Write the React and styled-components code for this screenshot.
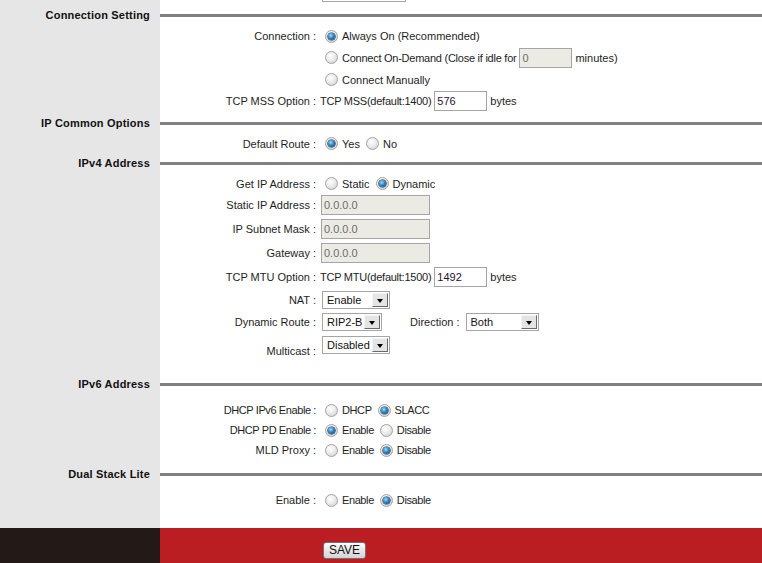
import React from "react"
import styled, { createGlobalStyle, css } from "styled-components"

const GlobalStyle = createGlobalStyle`
  html, body {
    margin: 0;
    padding: 0;
    overflow: hidden;
    background: #fff;
  }
  body {
    font-family: "Liberation Sans", Arial, sans-serif;
    font-size: 11px;
    color: #1e1e1e;
  }
`

const Page = styled.div`
  width: 762px;
  height: 563px;
  display: flex;
  flex-direction: column;
  overflow: hidden;
`

const Main = styled.div`
  height: 528px;
  flex-shrink: 0;
  display: flex;
  flex-direction: column;
  overflow: hidden;
  background: linear-gradient(90deg, #e6e6e6 0 160px, #fff 160px);
`

const Row = styled.div`
  height: ${(p) => p.$h}px;
  flex-shrink: 0;
  display: grid;
  grid-template-columns: 160px 160px 1fr;
  align-items: ${(p) => (p.$top ? "start" : "center")};
`

const SectionRow = styled.div`
  height: ${(p) => p.$h}px;
  flex-shrink: 0;
  display: grid;
  grid-template-columns: 160px 1fr;
  align-items: center;
`

const SectionTitle = styled.div`
  font-weight: bold;
  color: #111;
  text-align: right;
  padding-right: 10px;
  letter-spacing: 0.2px;
  white-space: nowrap;
`

const Rule = styled.div`
  height: 3px;
  background: #808080;
`

const Label = styled.div`
  grid-column: 2;
  text-align: right;
  padding-right: 4px;
  white-space: nowrap;
  letter-spacing: ${(p) => (p.$tight ? "-0.4px" : "normal")};
  ${(p) =>
    p.$bottom &&
    css`
      align-self: end;
      padding-bottom: 3px;
    `}
`

const Field = styled.div`
  grid-column: 3;
  display: flex;
  align-items: center;
  white-space: nowrap;
  ${(p) =>
    p.$top &&
    css`
      align-self: start;
      padding-top: ${p.$top}px;
    `}
`

const Option = styled.span`
  display: inline-flex;
  align-items: center;
  margin-right: 1px;
  letter-spacing: ${(p) => (p.$tight ? "-0.4px" : "normal")};
`

const Radio = styled.span`
  position: relative;
  display: inline-block;
  flex-shrink: 0;
  box-sizing: border-box;
  width: 13px;
  height: 13px;
  margin: 0 4px 0 5px;
  border-radius: 50%;
  border: 1px solid #a3a3a3;
  background: radial-gradient(circle at 40% 35%, #ffffff 0%, #ececec 45%, #c9c9c9 100%);
  ${(p) =>
    p.$checked &&
    css`
      &::after {
        content: "";
        position: absolute;
        left: 2px;
        top: 2px;
        width: 7px;
        height: 7px;
        border-radius: 50%;
        background: radial-gradient(circle at 40% 35%, #9ee0ff 0%, #2a86c8 45%, #0a3b6b 100%);
        box-shadow: 0 0 0 0.6px #1b2a3a;
      }
    `}
`

const TextBox = styled.input`
  box-sizing: border-box;
  width: ${(p) => p.$w}px;
  height: 20px;
  margin: 0 ${(p) => p.$mr || 0}px 0 ${(p) => p.$ml || 0}px;
  padding: 0 2px;
  border: 1px solid #a5a5a5;
  background: ${(p) => (p.disabled ? "#ebebe4" : "#fff")};
  font-family: "Liberation Sans", Arial, sans-serif;
  font-size: 11px;
  color: ${(p) => (p.disabled ? "#6d6d6d" : "#2a1030")};
  outline: none;
`

const Select = styled.div`
  box-sizing: border-box;
  display: inline-flex;
  align-items: center;
  justify-content: space-between;
  width: ${(p) => p.$w}px;
  height: 18px;
  margin-left: ${(p) => p.$ml || 1}px;
  padding: 0 1px 0 4px;
  border: 1px solid #a5a5a5;
  background: #fff;
  font-size: 11px;
  color: #111;
`

const SelectButton = styled.span`
  box-sizing: border-box;
  display: flex;
  align-items: center;
  justify-content: center;
  width: 16px;
  height: 14px;
  border: 1px solid;
  border-color: #f4f4f4 #6a6a6a #6a6a6a #f4f4f4;
  background: #e4e4e4;
  &::after {
    content: "";
    margin-top: 2px;
    border-left: 3.5px solid transparent;
    border-right: 3.5px solid transparent;
    border-top: 4px solid #000;
  }
`

const TopSelect = styled(Select)`
  margin-top: -16px;
`

const Inline = styled.span`
  margin: 0 ${(p) => p.$mr || 0}px 0 ${(p) => p.$ml || 0}px;
  letter-spacing: ${(p) => (p.$tight ? "-0.25px" : "normal")};
`

const Footer = styled.div`
  height: 35px;
  flex-shrink: 0;
  display: grid;
  grid-template-columns: 160px 1fr;
`

const FooterSide = styled.div`
  background: #231a17;
`

const FooterBar = styled.div`
  background: #bb1e22;
  padding: 14px 0 0 163px;
`

const SaveButton = styled.button`
  box-sizing: border-box;
  width: 43px;
  height: 17px;
  padding: 0;
  border: 1px solid #707070;
  border-radius: 3px;
  background: linear-gradient(#fcfcfc, #e6e6e6 50%, #d4d4d4);
  font-family: "Liberation Sans", Arial, sans-serif;
  font-size: 12px;
  color: #111;
  line-height: 15px;
`

function Section({ title, h }) {
  return (
    <SectionRow $h={h}>
      <SectionTitle>{title}</SectionTitle>
      <Rule />
    </SectionRow>
  )
}

function Choice({ checked, tight, children }) {
  return (
    <Option $tight={tight}>
      <Radio $checked={checked} />
      {children}
    </Option>
  )
}

function Dropdown({ value, w, ml, top }) {
  const Comp = top ? TopSelect : Select
  return (
    <Comp $w={w} $ml={ml}>
      <span>{value}</span>
      <SelectButton />
    </Comp>
  )
}

export default function App() {
  return (
    <Page>
      <GlobalStyle />
      <Main>
        <Row $h={5} $top>
          <Field>
            <Dropdown value="" w={84} ml={2} top />
          </Field>
        </Row>
        <Section title="Connection Setting" h={20} />
        <Row $h={22}>
          <Label>Connection :</Label>
          <Field>
            <Choice checked>Always On (Recommended)</Choice>
          </Field>
        </Row>
        <Row $h={21}>
          <Field>
            <Choice>
              <Inline $tight>Connect On-Demand (Close if idle for</Inline>
            </Choice>
            <TextBox $w={53} $ml={2} $mr={3} disabled defaultValue="0" />
            minutes)
          </Field>
        </Row>
        <Row $h={23}>
          <Field>
            <Choice>Connect Manually</Choice>
          </Field>
        </Row>
        <Row $h={20}>
          <Label>TCP MSS Option :</Label>
          <Field>
            <Inline $tight>TCP MSS(default:1400)</Inline>
            <TextBox $w={53} $ml={3} $mr={3} defaultValue="576" />
            bytes
          </Field>
        </Row>
        <Section title="IP Common Options" h={24} />
        <Row $h={17}>
          <Label>Default Route :</Label>
          <Field>
            <Choice checked>Yes</Choice>
            <Choice>No</Choice>
          </Field>
        </Row>
        <Section title="IPv4 Address" h={22} />
        <Row $h={19}>
          <Label>Get IP Address :</Label>
          <Field>
            <Choice>Static</Choice>
            <Choice checked>Dynamic</Choice>
          </Field>
        </Row>
        <Row $h={24}>
          <Label>Static IP Address :</Label>
          <Field>
            <TextBox $w={109} $ml={1} disabled defaultValue="0.0.0.0" />
          </Field>
        </Row>
        <Row $h={24}>
          <Label>IP Subnet Mask :</Label>
          <Field>
            <TextBox $w={109} $ml={1} disabled defaultValue="0.0.0.0" />
          </Field>
        </Row>
        <Row $h={24}>
          <Label>Gateway :</Label>
          <Field>
            <TextBox $w={109} $ml={1} disabled defaultValue="0.0.0.0" />
          </Field>
        </Row>
        <Row $h={23}>
          <Label>TCP MTU Option :</Label>
          <Field>
            <Inline $tight>TCP MTU(default:1500)</Inline>
            <TextBox $w={53} $ml={3} $mr={3} defaultValue="1492" />
            bytes
          </Field>
        </Row>
        <Row $h={23}>
          <Label>NAT :</Label>
          <Field>
            <Dropdown value="Enable" w={68} ml={2} />
          </Field>
        </Row>
        <Row $h={22}>
          <Label>Dynamic Route :</Label>
          <Field>
            <Dropdown value="RIP2-B" w={60} ml={2} />
            <Inline $ml={28} $mr={4}>
              Direction :
            </Inline>
            <Dropdown value="Both" w={73} ml={2} />
          </Field>
        </Row>
        <Row $h={27}>
          <Label $bottom>Multicast :</Label>
          <Field $top={3}>
            <Dropdown value="Disabled" w={68} ml={2} />
          </Field>
        </Row>
        <Row $h={14} />
        <Section title="IPv6 Address" h={20} />
        <Row $h={6} />
        <Row $h={20}>
          <Label $tight>DHCP IPv6 Enable :</Label>
          <Field>
            <Choice tight>DHCP</Choice>
            <Choice tight checked>SLACC</Choice>
          </Field>
        </Row>
        <Row $h={20}>
          <Label $tight>DHCP PD Enable :</Label>
          <Field>
            <Choice tight checked>Enable</Choice>
            <Choice tight>Disable</Choice>
          </Field>
        </Row>
        <Row $h={20}>
          <Label>MLD Proxy :</Label>
          <Field>
            <Choice tight>Enable</Choice>
            <Choice tight checked>Disable</Choice>
          </Field>
        </Row>
        <Row $h={4} />
        <Section title="Dual Stack Lite" h={20} />
        <Row $h={6} />
        <Row $h={20}>
          <Label>Enable :</Label>
          <Field>
            <Choice tight>Enable</Choice>
            <Choice tight checked>Disable</Choice>
          </Field>
        </Row>
      </Main>
      <Footer>
        <FooterSide />
        <FooterBar>
          <SaveButton>SAVE</SaveButton>
        </FooterBar>
      </Footer>
    </Page>
  )
}
